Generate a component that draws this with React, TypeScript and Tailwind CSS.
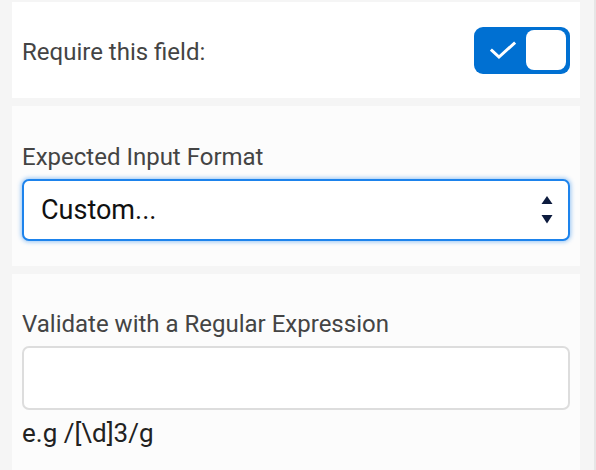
import React from "react";

const font = { fontFamily: "Roboto, 'Noto Sans', Arial, sans-serif" };

function Toggle() {
  return (
    <div className="flex h-[47px] w-[96px] items-center justify-between rounded-[9px] bg-[#0070d2] pl-[16px] pr-[4px]">
      <svg width="26" height="19" viewBox="0 0 26 19" fill="none">
        <path d="M2 9.5 L9 16 L24 2.5" stroke="#fff" strokeWidth="3" strokeLinecap="square" strokeLinejoin="miter" />
      </svg>
      <div className="h-[40px] w-[40px] rounded-[8px] bg-white" />
    </div>
  );
}

function SelectBox() {
  return (
    <div className="flex h-[62px] w-full items-center justify-between rounded-[7px] border-2 border-[#1d83ec] bg-white pl-[17px] pr-[15px] shadow-[0_0_4px_1px_rgba(29,131,236,0.45)]">
      <span className="text-[27px] leading-[32px] text-[#111]">Custom...</span>
      <svg width="12" height="30" viewBox="0 0 12 30">
        <path d="M6 1 L11.5 9 L0.5 9 Z" fill="#0d1b3e" />
        <path d="M0.5 20 L11.5 20 L6 28.5 Z" fill="#0d1b3e" />
      </svg>
    </div>
  );
}

export default function App() {
  return (
    <div className="min-h-[470px] h-[470px] overflow-hidden bg-[#f5f5f5] flex" style={font}>
      <div className="flex flex-1 flex-col gap-[8px] pl-[12px] pr-[14px] pt-[2px]">
        {/* Required toggle */}
        <section className="flex h-[96px] items-center justify-between bg-white px-[10px]">
          <span className="pt-[4px] text-[24px] leading-[28px] text-[#444]">Require this field:</span>
          <Toggle />
        </section>

        {/* Input format */}
        <section className="flex h-[160px] flex-col bg-[#fcfcfc] px-[10px] pt-[37px]">
          <label className="text-[24px] leading-[28px] text-[#444]">Expected Input Format</label>
          <div className="mt-[8px]">
            <SelectBox />
          </div>
        </section>

        {/* Regex */}
        <section className="flex flex-1 flex-col bg-[#fcfcfc] px-[10px] pt-[36px]">
          <label className="text-[24px] leading-[28px] text-[#444]">Validate with a Regular Expression</label>
          <div className="mt-[8px] h-[64px] w-full rounded-[7px] border-2 border-[#dddddd] bg-white" />
          <p className="mt-[8px] text-[26px] leading-[30px] text-[#222]">e.g /[\d]3/g</p>
        </section>
      </div>
      <div className="w-[2px] bg-[#e6e6e6]" />
    </div>
  );
}
